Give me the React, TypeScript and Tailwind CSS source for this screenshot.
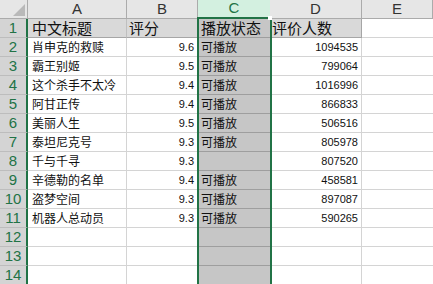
const rows: [string, string, string, string][] = [
  ["肖申克的救赎", "9.6", "可播放", "1094535"],
  ["霸王别姬", "9.5", "可播放", "799064"],
  ["这个杀手不太冷", "9.4", "可播放", "1016996"],
  ["阿甘正传", "9.4", "可播放", "866833"],
  ["美丽人生", "9.5", "可播放", "506516"],
  ["泰坦尼克号", "9.3", "可播放", "805978"],
  ["千与千寻", "9.3", "", "807520"],
  ["辛德勒的名单", "9.4", "可播放", "458581"],
  ["盗梦空间", "9.3", "可播放", "897087"],
  ["机器人总动员", "9.3", "可播放", "590265"],
  ["", "", "", ""],
  ["", "", "", ""],
  ["", "", "", ""],
];

const cjk = "font-['Noto_Sans_CJK_SC',sans-serif]";
const num = "font-['Liberation_Sans',Arial,sans-serif]";

function RowHead({ n }: { n: number }) {
  return (
    <div className="flex items-center justify-center bg-[#d4d4d4] border-r-2 border-r-[#217346] border-b border-b-[#bdbdbd] text-[15px] text-[#217346] font-['Liberation_Sans',Arial,sans-serif]">
      {n}
    </div>
  );
}

export default function App() {
  return (
    <div className="relative w-[433px] h-[284px] overflow-hidden bg-white">
      <div className="grid grid-cols-[28px_99px_71px_72px_92px_1fr] auto-rows-[19px]">
        {/* column letters */}
        <div className="relative bg-[#e6e6e6] border-r border-b border-[#ababab]">
          <svg className="absolute left-[13px] top-[4px]" width="13" height="13" viewBox="0 0 13 13">
            <polygon points="12,0 12,12 0,12" fill="#b9b9b9" />
          </svg>
        </div>
        {["A", "B"].map((c) => (
          <div key={c} className={`flex items-center justify-center bg-[#e6e6e6] border-r border-b border-[#ababab] text-[15px] text-[#333] ${num}`}>
            {c}
          </div>
        ))}
        <div className={`flex items-center justify-center bg-[#d3f0e0] border-b-2 border-[#217346] text-[15px] text-[#217346] ${num}`}>
          C
        </div>
        {["D", "E"].map((c) => (
          <div key={c} className={`flex items-center justify-center bg-[#e6e6e6] border-r border-b border-[#ababab] text-[15px] text-[#333] ${num}`}>
            {c}
          </div>
        ))}

        {/* row 1: table heading */}
        <RowHead n={1} />
        <div className={`flex items-center px-[4px] bg-[#d9d9d9] border-r border-b border-r-[#bfbfbf] border-b-[#a6a6a6] text-[15px] text-[#111] ${cjk}`}>
          中文标题
        </div>
        <div className={`flex items-center px-[2px] bg-[#d9d9d9] border-r border-b border-r-[#bfbfbf] border-b-[#a6a6a6] text-[15px] text-[#111] ${cjk}`}>
          评分
        </div>
        <div className={`flex items-center px-[3px] bg-[#c6c6c6] border-b border-b-[#9e9e9e] text-[15px] text-[#111] ${cjk}`}>
          播放状态
        </div>
        <div className={`flex items-center px-[2px] bg-[#d9d9d9] border-r border-b border-r-[#a6a6a6] border-b-[#a6a6a6] text-[15px] text-[#111] ${cjk}`}>
          评价人数
        </div>
        <div className="border-b border-[#d4d4d4]" />

        {rows.map((r, i) => (
          <div key={i} className="contents">
            <RowHead n={i + 2} />
            <div className={`flex items-end pb-[1px] px-[4px] border-r border-b border-[#d4d4d4] text-[12px] leading-[16px] text-[#111] ${cjk}`}>
              {r[0]}
            </div>
            <div className={`flex items-end justify-end pb-[2px] px-[3px] border-r border-b border-[#d4d4d4] text-[11px] leading-[14px] text-[#111] ${num}`}>
              {r[1]}
            </div>
            <div className={`flex items-end pb-[1px] px-[3px] bg-[#c6c6c6] border-b border-[#9e9e9e] text-[12px] leading-[16px] text-[#111] ${cjk}`}>
              {r[2]}
            </div>
            <div className={`flex items-end justify-end pb-[2px] px-[3px] border-r border-b border-[#d4d4d4] text-[11px] leading-[14px] text-[#111] ${num}`}>
              {r[3]}
            </div>
            <div className="border-b border-[#d4d4d4]" />
          </div>
        ))}
      </div>

      {/* selection outline on column C */}
      <div className="absolute left-[197px] top-[17px] w-[75px] h-[280px] border-2 border-b-0 border-[#217346]" />
      <div className="absolute left-[268px] top-[16px] w-[4px] h-[4px] bg-white" />
    </div>
  );
}
